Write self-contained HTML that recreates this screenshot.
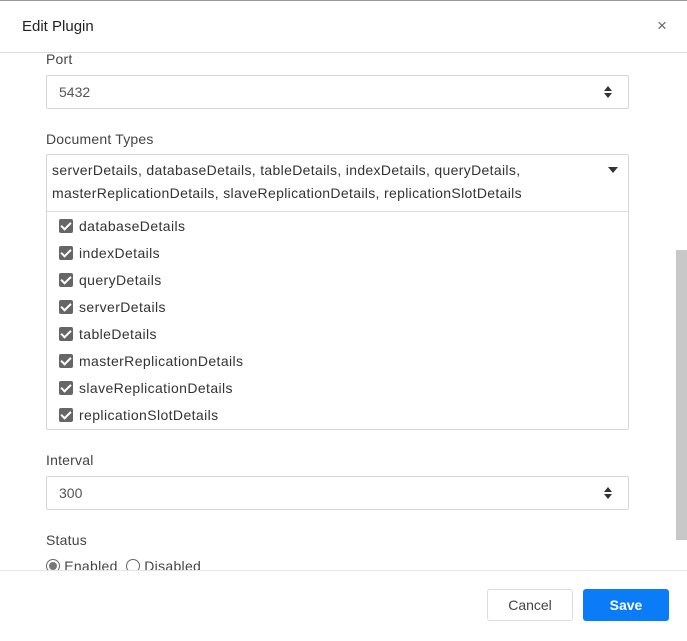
<html><head><style>
body{margin:0;width:687px;height:640px;background:#fff;font-family:"Liberation Sans",sans-serif;color:#333;position:relative;overflow:hidden}
.a{position:absolute}
.lbl{font-size:14px;color:#444;letter-spacing:0.2px}
.inp{border:1px solid #d6d6d6;border-radius:2px;box-sizing:border-box;font-size:14px;color:#555}
.it{position:absolute;left:59px;font-size:14px;color:#333;height:16px;line-height:16px;letter-spacing:0.4px}
.it i{display:inline-block;width:14px;height:14px;background:#666;border-radius:2px;vertical-align:-2px;margin-right:6px;position:relative}
.it i:after{content:"";position:absolute;left:4px;top:1px;width:4px;height:8px;border:solid #fff;border-width:0 2px 2px 0;transform:rotate(45deg)}
.sp{position:absolute;right:16px;top:10px;width:8px;height:12px}
</style></head><body>
<div class="a" style="left:0;top:0;width:687px;height:1px;background:#999"></div>
<div class="a" style="left:22px;top:18px;font-size:15px;color:#222">Edit Plugin</div>
<div class="a" style="left:657px;top:16px;font-size:17px;color:#666">×</div>
<div class="a" style="left:0;top:52px;width:687px;height:1px;background:#ddd"></div>
<div class="a" style="left:676px;top:250px;width:11px;height:290px;background:#c8c8c8"></div>
<div class="a lbl" style="left:46px;top:51px">Port</div>
<div class="a inp" style="left:46px;top:75px;width:583px;height:34px;padding:8px 12px">5432<svg class="sp" viewBox="0 0 8 12"><path d="M4 0L8 5H0Z M4 12L8 7H0Z" fill="#333"/></svg></div>
<div class="a lbl" style="left:46px;top:131px">Document Types</div>
<div class="a inp" style="left:46px;top:154px;width:583px;height:276px"></div>
<div class="a" style="left:47px;top:211px;width:581px;height:1px;background:#ddd"></div>
<div class="a" style="left:52px;top:159px;font-size:14px;line-height:23px;color:#333;letter-spacing:0.33px;white-space:nowrap">serverDetails, databaseDetails, tableDetails, indexDetails, queryDetails,<br>masterReplicationDetails, slaveReplicationDetails, replicationSlotDetails</div>
<svg class="a" style="left:608px;top:167px" width="10" height="6"><path d="M0 0H10L5 6Z" fill="#333"/></svg>
<div class="it" style="top:218px"><i></i>databaseDetails</div>
<div class="it" style="top:245px"><i></i>indexDetails</div>
<div class="it" style="top:272px"><i></i>queryDetails</div>
<div class="it" style="top:299px"><i></i>serverDetails</div>
<div class="it" style="top:326px"><i></i>tableDetails</div>
<div class="it" style="top:353px"><i></i>masterReplicationDetails</div>
<div class="it" style="top:380px"><i></i>slaveReplicationDetails</div>
<div class="it" style="top:407px"><i></i>replicationSlotDetails</div>
<div class="a lbl" style="left:46px;top:452px">Interval</div>
<div class="a inp" style="left:46px;top:476px;width:583px;height:34px;padding:8px 12px">300<svg class="sp" viewBox="0 0 8 12"><path d="M4 0L8 5H0Z M4 12L8 7H0Z" fill="#333"/></svg></div>
<div class="a lbl" style="left:46px;top:532px">Status</div>
<div class="a" style="left:46px;top:558px;font-size:14px;color:#444;white-space:nowrap;letter-spacing:0.3px"><span style="display:inline-block;width:12px;height:12px;border:1px solid #666;border-radius:50%;vertical-align:-2px;position:relative"><span style="position:absolute;left:2px;top:2px;width:8px;height:8px;border-radius:50%;background:#777"></span></span> Enabled&nbsp; <span style="display:inline-block;width:12px;height:12px;border:1px solid #666;border-radius:50%;vertical-align:-2px"></span> Disabled</div>
<div class="a" style="left:0;top:570px;width:687px;height:70px;background:#fff;border-top:1px solid #e2e6ea"></div>
<div class="a" style="left:487px;top:589px;width:86px;height:32px;border:1px solid #ddd;border-radius:3px;box-sizing:border-box;text-align:center;line-height:30px;font-size:14px;color:#444">Cancel</div>
<div class="a" style="left:583px;top:589px;width:86px;height:32px;background:#0a7cf8;border-radius:3px;text-align:center;line-height:32px;font-size:14px;color:#fff;font-weight:bold">Save</div>
</body></html>
